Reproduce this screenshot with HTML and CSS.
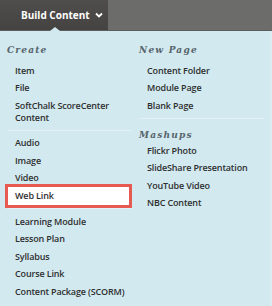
FILE: index.html
```html
<!DOCTYPE html>
<html lang="en">
<head>
    <meta charset="UTF-8">
    <title>Build Content</title>
    <link rel="stylesheet" href="styles.css">
</head>
<body>

    <!-- Top bar with the Build Content tab -->
    <div class="top-bar">
        <div class="build-tab">
            <span>Build Content</span>
            <svg class="chevron" width="8" height="6" viewBox="0 0 8 6"><path d="M1 1.5 L4 4.5 L7 1.5" fill="none" stroke="#fff" stroke-width="1.8"/></svg>
            <span class="notch"></span>
        </div>
    </div>

    <!-- Dropdown menu -->
    <div class="menu">
        <div class="menu-col left">
            <h2>Create</h2>
            <ul class="group">
                <li>Item</li>
                <li>File</li>
                <li>SoftChalk ScoreCenter Content</li>
            </ul>
            <ul class="group">
                <li>Audio</li>
                <li>Image</li>
                <li>Video</li>
                <li class="highlight">Web Link</li>
            </ul>
            <ul class="group last">
                <li>Learning Module</li>
                <li>Lesson Plan</li>
                <li>Syllabus</li>
                <li>Course Link</li>
                <li>Content Package (SCORM)</li>
            </ul>
        </div>
        <div class="menu-col right">
            <h2>New Page</h2>
            <ul class="group">
                <li>Content Folder</li>
                <li>Module Page</li>
                <li>Blank Page</li>
            </ul>
            <h2 class="sub">Mashups</h2>
            <ul class="group last">
                <li>Flickr Photo</li>
                <li>SlideShare Presentation</li>
                <li>YouTube Video</li>
                <li>NBC Content</li>
            </ul>
        </div>
    </div>

</body>
</html>
```

FILE: styles.css
```css
/* Reset */
body, html {
    margin: 0;
    padding: 0;
    width: 272px;
    height: 306px;
    overflow: hidden;
    font-family: "Open Sans", "DejaVu Sans", sans-serif;
    background-color: #d1e9ef;
}

/* Dark top bar */
.top-bar {
    height: 30px;
    background-color: #6c6c6b;
    border-bottom: 1px solid #5d5d5c;
    display: flex;
}

.build-tab {
    position: relative;
    width: 108px;
    display: flex;
    align-items: center;
    padding-left: 21px;
    box-sizing: border-box;
    background: linear-gradient(#504e4c, #454341);
    color: white;
    font-size: 10px;
    font-weight: bold;
}

.chevron {
    margin-left: 5px;
}

/* little pointer under the tab */
.notch {
    position: absolute;
    left: 50px;
    bottom: -1px;
    width: 0;
    height: 0;
    border-left: 5px solid transparent;
    border-right: 5px solid transparent;
    border-bottom: 4px solid #d1e9ef;
}

/* Menu body */
.menu {
    display: flex;
    height: 275px;
    color: #2f2f2f;
    font-size: 9px;
    font-weight: 600;
    letter-spacing: -0.15px;
    border-right: 2px solid #dcedf2;
}

.menu-col {
    padding-top: 12px;
}

.menu-col.left {
    width: 132px;
    padding-left: 7px;
    box-sizing: border-box;
}

.menu-col.right {
    width: 132px;
    padding-left: 7px;
    box-sizing: border-box;
}

.menu h2 {
    margin: 0 0 5px 0;
    font-family: "DejaVu Serif", Georgia, serif;
    font-style: italic;
    font-weight: bold;
    font-size: 9px;
    line-height: 14px;
    letter-spacing: 1.2px;
    color: #56646c;
}

.menu h2.sub {
    margin: 9.5px 0 0 0;
}

.group {
    list-style: none;
    margin: 0;
    padding: 0 0 3px 0;
    border-bottom: 1px solid #e2f1f5;
    margin-bottom: 4px;
}

.group.last {
    border-bottom: none;
}

.group li {
    padding: 2.75px 0 2.75px 8px;
    line-height: 12px;
}

/* red box round Web Link */
.group li.highlight {
    margin: -3px 0 -3px -2px;
    padding: 3px 0 3px 7px;
    border: 3px solid #e65a52;
    background-color: white;
}
```
